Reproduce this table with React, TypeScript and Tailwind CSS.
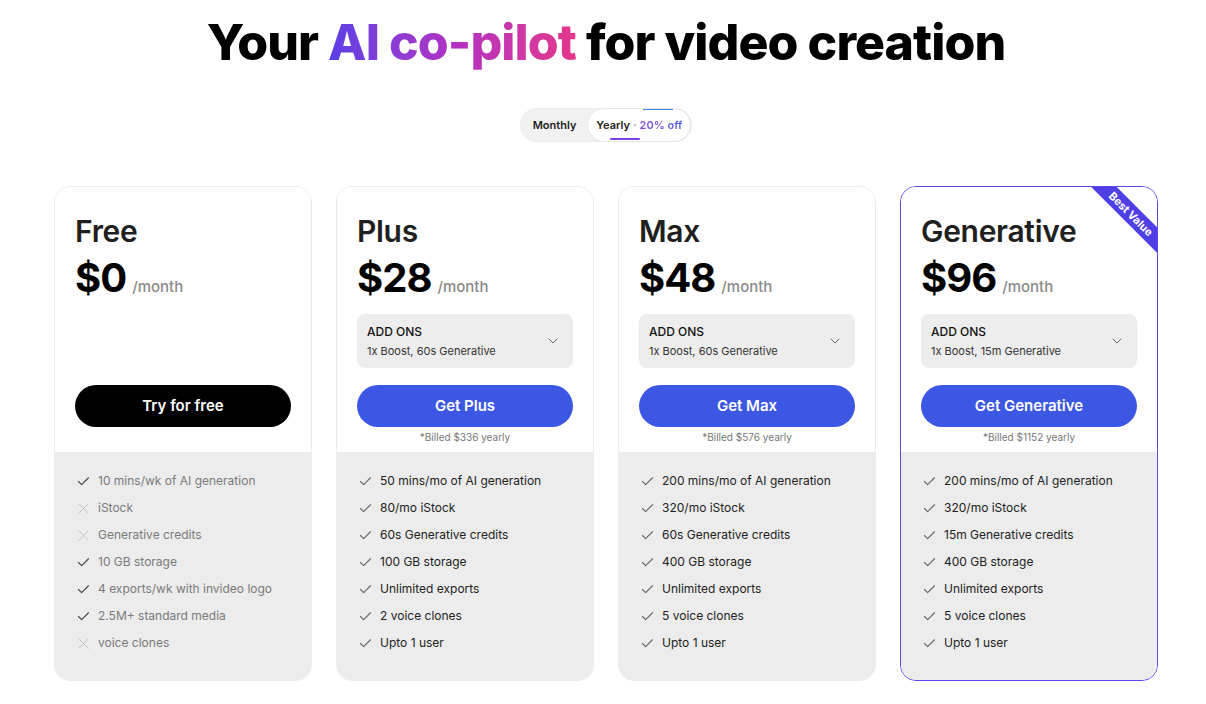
import { Check, ChevronDown, X } from "lucide-react";

type Feature = { text: string; ok: boolean };

type Plan = {
  name: string;
  price: string;
  addons?: string;
  cta: string;
  billed?: string;
  featured?: boolean;
  free?: boolean;
  features: Feature[];
};

const plans: Plan[] = [
  {
    name: "Free",
    price: "$0",
    cta: "Try for free",
    free: true,
    features: [
      { text: "10 mins/wk of AI generation", ok: true },
      { text: "iStock", ok: false },
      { text: "Generative credits", ok: false },
      { text: "10 GB storage", ok: true },
      { text: "4 exports/wk with invideo logo", ok: true },
      { text: "2.5M+ standard media", ok: true },
      { text: "voice clones", ok: false },
    ],
  },
  {
    name: "Plus",
    price: "$28",
    addons: "1x Boost, 60s Generative",
    cta: "Get Plus",
    billed: "*Billed $336 yearly",
    features: [
      { text: "50 mins/mo of AI generation", ok: true },
      { text: "80/mo iStock", ok: true },
      { text: "60s Generative credits", ok: true },
      { text: "100 GB storage", ok: true },
      { text: "Unlimited exports", ok: true },
      { text: "2 voice clones", ok: true },
      { text: "Upto 1 user", ok: true },
    ],
  },
  {
    name: "Max",
    price: "$48",
    addons: "1x Boost, 60s Generative",
    cta: "Get Max",
    billed: "*Billed $576 yearly",
    features: [
      { text: "200 mins/mo of AI generation", ok: true },
      { text: "320/mo iStock", ok: true },
      { text: "60s Generative credits", ok: true },
      { text: "400 GB storage", ok: true },
      { text: "Unlimited exports", ok: true },
      { text: "5 voice clones", ok: true },
      { text: "Upto 1 user", ok: true },
    ],
  },
  {
    name: "Generative",
    price: "$96",
    addons: "1x Boost, 15m Generative",
    cta: "Get Generative",
    billed: "*Billed $1152 yearly",
    featured: true,
    features: [
      { text: "200 mins/mo of AI generation", ok: true },
      { text: "320/mo iStock", ok: true },
      { text: "15m Generative credits", ok: true },
      { text: "400 GB storage", ok: true },
      { text: "Unlimited exports", ok: true },
      { text: "5 voice clones", ok: true },
      { text: "Upto 1 user", ok: true },
    ],
  },
];

const PlanCard = ({ plan }: { plan: Plan }) => {
  return (
    <div
      className={
        "relative flex flex-col overflow-hidden rounded-2xl border " +
        (plan.featured ? "border-[#5a48ec]" : "border-[#ececec]")
      }
    >
      {plan.featured && (
        <div className="absolute left-[176px] top-[18px] h-[18px] w-[108px] rotate-45 bg-[#4f3fe6] text-center text-[11px] font-bold leading-[18px] text-white">
          Best Value
        </div>
      )}

      <div className="flex flex-col bg-white px-5 pb-[9px] pt-[26px]">
        <h2 className="text-[30px] font-semibold leading-[36px] tracking-[-0.3px] text-[#1f1f1f]">{plan.name}</h2>
        <div className="mt-[5px] flex items-baseline gap-[6px]">
          <span className="text-[40px] font-bold leading-[48px] tracking-[-1px] text-black">{plan.price}</span>
          <span className="text-[15px] font-medium text-[#8a8a8a]">/month</span>
        </div>

        {plan.addons ? (
          <div className="mt-[12px] flex h-[54px] items-center justify-between rounded-lg bg-[#ededed] pl-[10px] pr-[12px]">
            <div className="flex flex-col">
              <span className="text-[12px] font-medium leading-[16px] text-[#111]">ADD ONS</span>
              <span className="mt-[4px] text-[11px] leading-[14px] text-[#333]">{plan.addons}</span>
            </div>
            <ChevronDown className="h-4 w-4 text-[#666]" strokeWidth={1.5} />
          </div>
        ) : (
          <div className="mt-[12px] h-[54px]" />
        )}

        <button
          className={
            "mt-[17px] h-[42px] w-full rounded-full text-[15px] font-semibold text-white " +
            (plan.free ? "bg-black" : "bg-[#3c57e3]")
          }
        >
          {plan.cta}
        </button>
        <p className="mt-[4px] h-[12px] text-center text-[10px] leading-[12px] text-[#777]">{plan.billed ?? ""}</p>
      </div>

      <ul className="flex flex-1 flex-col gap-[9px] bg-[#ececec] pb-[28px] pl-[22px] pr-4 pt-[20px]">
        {plan.features.map((f, i) => (
          <li key={i} className="flex h-[18px] items-center gap-[8px] text-[12px]">
            <span className="flex h-[13px] w-[13px] items-center justify-center">
              {f.ok ? (
                <Check
                  className={"h-[15px] w-[15px] shrink-0 " + (plan.free ? "text-[#444]" : "text-[#666]")}
                  strokeWidth={1.75}
                />
              ) : (
                <X className="h-[19px] w-[19px] shrink-0 text-[#bbbbbb]" strokeWidth={1} />
              )}
            </span>
            <span className={plan.free ? "text-[#7a7a7a]" : "text-[#222]"}>{f.text}</span>
          </li>
        ))}
      </ul>
    </div>
  );
};

export default function App() {
  return (
    <div className="min-h-[704px] w-full bg-white pl-[6px] font-['Inter','Noto_Sans',sans-serif]">
      <div className="flex flex-col items-center pt-[12px]">
        <h1 className="text-[50px] font-extrabold leading-[60px] tracking-[-0.95px] text-black">
          Your{" "}
          <span className="bg-gradient-to-r from-[#5a3ee6] via-[#b22fc4] to-[#e5358a] bg-clip-text text-transparent">
            AI co-pilot
          </span>{" "}
          for video creation
        </h1>

        <div className="mt-[36px] flex h-[34px] items-center rounded-full border border-[#ececec] bg-[#f1f1f1]">
          <button className="pl-[12px] pr-[11px] text-[11px] font-semibold text-[#222]">Monthly</button>
          <div className="relative flex h-[34px] items-center rounded-full border border-[#e6e6e6] bg-white px-[8px] text-[11px] font-semibold">
            <span className="text-[#222]">Yearly</span>
            <span className="mx-[3px] text-[#999]">·</span>
            <span className="bg-gradient-to-r from-[#8b3fd6] to-[#4b64e8] bg-clip-text text-transparent">20% off</span>
            <span className="absolute bottom-[1px] left-[22px] h-[2px] w-[30px] rounded-full bg-[#7b3fe0]" />
            <span className="absolute left-[55px] top-[0px] h-[1px] w-[30px] bg-[#3c8be8]" />
          </div>
        </div>

        <div className="mt-[44px] grid w-[1104px] grid-cols-4 gap-[24px]">
          {plans.map((p) => (
            <PlanCard key={p.name} plan={p} />
          ))}
        </div>
      </div>
    </div>
  );
}
